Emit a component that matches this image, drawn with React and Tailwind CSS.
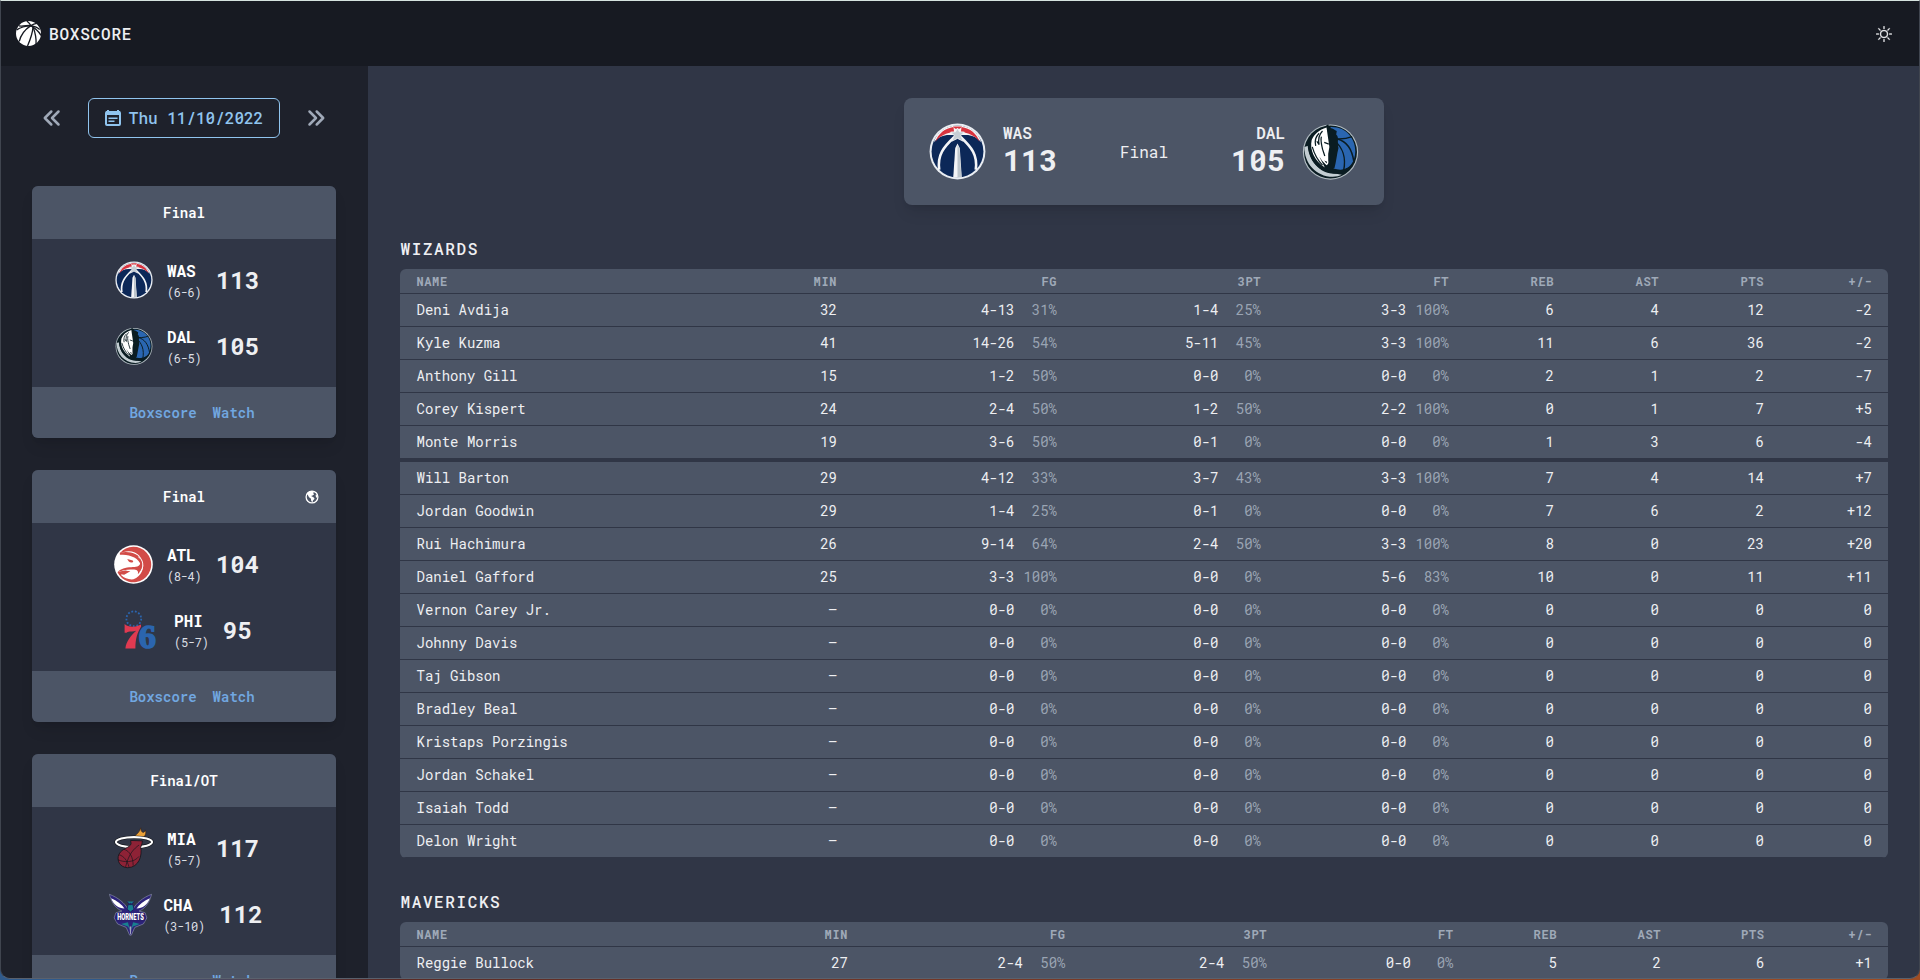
import React from "react";
import { BsSun } from "react-icons/bs";

function BallIcon({ className }) {
  return (
    <svg viewBox="0 0 76 76" className={className}>
      <circle cx="38" cy="38" r="38" fill="#fff" />
      <g fill="none" stroke="#171a22" strokeWidth="4">
        <path d="M2 27C14 19 30 15 45 14" />
        <path d="M9 15C22 17 38 12 45 14C56 16 66 20 72 26" />
        <path d="M45 14C27 26 14 44 10 62" />
        <path d="M52 18C50 40 42 60 35 76" />
        <path d="M52 18C58 34 62 52 61 70" />
        <path d="M45 14C58 22 70 32 76 44" />
        <path d="M33 0C38 4 42 8 45 14C50 11 56 8 63 7" />
      </g>
    </svg>
  );
}

function CalendarIcon({ className }) {
  return (
    <svg viewBox="0 0 16 16" className={className}>
      <path d="M2 0H4V2H2ZM12 0H14V2H12Z" fill="currentColor" />
      <rect x="1" y="2" width="14" height="13" rx="1" fill="none" stroke="currentColor" strokeWidth="2" />
      <path d="M1 1H15V5H1Z" fill="currentColor" />
      <path d="M3.500 7.500H12.500V9H3.500ZM3.500 10.500H9.500V12H3.500Z" fill="currentColor" />
    </svg>
  );
}

function GlobeIcon({ className }) {
  return (
    <svg viewBox="0 0 16 16" className={className}>
      <circle cx="8" cy="8" r="5.900" fill="none" stroke="currentColor" strokeWidth="1.300" />
      <path d="M5 2.500C7 1.800 9 1.900 10 2.600L9.200 4.200L10.200 5.200L8.600 6.500L7 7L9.500 8.200L10.600 9.800L9 11.600L8.400 13.400L7.200 11.800L6.800 9.600L5 8.200L3.600 5.600L2.800 6Z" fill="currentColor" />
      <path d="M12 5L13.600 7.200L12.600 9L11.600 7Z" fill="currentColor" />
    </svg>
  );
}

function WizardsLogo({ className }) {
  return (
    <svg viewBox="0 0 100 100" className={className}>
      <circle cx="50" cy="50" r="49" fill="#e9edf2" />
      <circle cx="50" cy="50" r="45.500" fill="#0c2858" />
      <path d="M8 34C14 16 30 4.500 50 4.500S86 16 92 34C84 24 72 20 62 21H38C28 20 16 24 8 34Z" fill="#f4f5f7" />
      <path d="M11 33C16 19 28 9 43 7L44 16C31 17 19 23 11 33Z" fill="#d8343f" />
      <path d="M89 33C84 19 72 9 57 7L56 16C69 17 81 23 89 33Z" fill="#d8343f" />
      <path d="M42 6L58 6L54 10H46Z" fill="#d8343f" />
      <path d="M44 25C26 42 14 56 18 82" stroke="#f4f5f7" strokeWidth="4.500" fill="none" />
      <path d="M56 25C74 42 86 56 82 82" stroke="#f4f5f7" strokeWidth="4.500" fill="none" />
      <path d="M50 9L53.500 15.500L62 16L56 22L60 32L50 27L40 32L44 22L38 16L46.500 15.500Z" fill="#c5cdd4" stroke="#f4f5f7" strokeWidth="1.500" />
      <path d="M50 36L54 44L57.500 96H42.500L46 44Z" fill="#f4f5f7" />
      <path d="M50 38L53.500 45L57 95H50Z" fill="#bec6cc" />
    </svg>
  );
}

function MavericksLogo({ className }) {
  return (
    <svg viewBox="0 0 100 100" className={className}>
      <circle cx="50" cy="51" r="48.500" fill="#b3bdc3" />
      <circle cx="50" cy="51" r="46.500" fill="#0a1c22" />
      <path d="M50 7C78 6 94 28 93.500 50C93 68 84 80 70 83L55 80L60 50L52 18Z" fill="#2a66b1" />
      <g stroke="#0a1c22" strokeWidth="2.600" fill="none">
        <path d="M50 27C64 29 78 28 88 24" />
        <path d="M62 28C78 32 88 46 91 68" />
        <path d="M58 32C70 42 78 60 73 84" />
      </g>
      <path d="M4 42C4 70 24 94 54 94.500C60 94.500 66 93 70 91C66 90 60 89 54 88C30 86 12 66 11 40Z" fill="#c3cdd2" />
      <path d="M10 40C12 66 30 88 56 89C72 89 82 82 88 74C76 82 66 83 56 82L36 72L18 36Z" fill="#0a1c22" />
      <path d="M40 6L46 2L48 9C54 8 57 13 61 14L60 20C66 25 61 33 64 44C61 56 60 68 57 79L46 84L40 72L30 60L24 40C22 22 30 10 40 8Z" fill="#0a1c22" />
      <path d="M17 30C13 48 22 66 40 78C34 66 28 56 25 42C26 52 32 62 37 68L43 74C46 73 47 70 46 66L46 54L48 42L46 28L43 8C30 12 21 20 17 30Z" fill="#fff" />
      <g stroke="#0a1c22" strokeWidth="2.200" fill="none">
        <path d="M36 14C30 20 28 28 30 38L26 32" />
        <path d="M30 18C24 24 22 32 24 40" />
        <path d="M34 24C32 32 35 40 36 46L40 58" />
        <path d="M18 42C22 56 28 66 36 74" />
        <path d="M39 34L47 37" />
      </g>
      <path d="M39 66L44 68L43 71Z" fill="#0a1c22" />
    </svg>
  );
}

function HawksLogo({ className }) {
  return (
    <svg viewBox="0 0 100 100" className={className}>
      <circle cx="50" cy="50" r="49.500" fill="#fff" />
      <path d="M15 21A45.500 45.500 0 1 1 9 70L34 65C22 71 20 75 18 77A40 40 0 0 0 50 88A37 37 0 1 0 25 18Z" fill="#d24b47" />
      <path d="M15 20C36 15 64 20 73 42C77 54 70 67 61 75C64 66 58 63 48 63C34 62 20 65 9 70C16 61 30 57 44 57C56 57 66 56 67 47C58 29 36 25 15 25Z" fill="#d24b47" />
      <path d="M34 36L46 39C51 40 50 45 45 45C39 45 36 41 34 36Z" fill="#d24b47" />
      <path d="M10 71C20 65 32 65 42 67L26 76C20 76 15 73 10 71Z" fill="#d24b47" />
      <path d="M62 30C76 38 78 58 66 70" stroke="#fff" strokeWidth="2.500" fill="none" />
    </svg>
  );
}

function SixersLogo({ className }) {
  return (
    <svg viewBox="9 0 100 100" className={className}>
      <circle cx="41" cy="22" r="18.500" fill="none" stroke="#2b65ae" strokeWidth="4.500" strokeDasharray="4.500 4.440" />
      <path d="M18 35C27 44 44 44 59 36V42C50 56 45 72 45 96H20C22 78 34 64 47 52C38 56 29 51 23 57H18Z" fill="#e03a51" />
      <text x="53.500" y="95" fontFamily="Liberation Serif, serif" fontWeight="700" fontSize="86" fill="#2b65ae" stroke="#2b65ae" strokeWidth="4">6</text>
    </svg>
  );
}

function HeatLogo({ className }) {
  return (
    <svg viewBox="0 0 100 100" className={className}>
      <path d="M50 26C54 16 61 18 66 2C67 8 67 12 72 13C76 12 77 9 77 7C80 16 76 22 70 27Z" fill="#e9a13a" stroke="#3b2418" strokeWidth="1.500" />
      <ellipse cx="50" cy="36" rx="43" ry="12" fill="none" stroke="#15171d" strokeWidth="8" />
      <ellipse cx="50" cy="36" rx="43" ry="12" fill="none" stroke="#fff" strokeWidth="5" />
      <path d="M42 32L70 33L69 40L66 48C70 68 62 96 35 97C16 96 8 80 14 65C22 50 40 50 43 40Z" fill="#8e2236" stroke="#15171d" strokeWidth="2" />
      <path d="M14 66C26 69 34 80 38 95M26 53C40 57 48 72 48 92M62 43C50 52 38 62 30 95M12 78C24 84 50 86 62 70" stroke="#15171d" strokeWidth="1.600" fill="none" />
    </svg>
  );
}

function HornetsLogo({ className }) {
  return (
    <svg viewBox="0 0 100 100" className={className}>
      <path d="M1 3C20 10 38 24 44 38H56C62 24 80 10 99 3C95 18 88 34 70 42L84 46L88 58L80 72L60 80L52 98L48 98L40 80L20 72L12 58L16 46L30 42C12 34 5 18 1 3Z" fill="#2c237a" stroke="#8e93aa" strokeWidth="1.500" />
      <path d="M5 12C18 18 30 26 36 36C22 36 10 26 5 12Z" fill="#fff" />
      <path d="M95 12C82 18 70 26 64 36C78 36 90 26 95 12Z" fill="#fff" />
      <path d="M42 20L48 27H52L58 20M44 28L50 24L56 28L58 38L50 44L42 38Z" fill="#18808f" stroke="#1d1560" strokeWidth="2" />
      <path d="M28 72L44 68L50 90L56 68L72 72L56 78L50 88L44 78Z" fill="#18808f" />
      <path d="M48 78H52L51 96H49Z" fill="#a4a7c0" />
      <rect x="16" y="47" width="68" height="19" rx="2" fill="#2a1f6e" />
      <text x="50" y="63.500" textAnchor="middle" textLength="62" lengthAdjust="spacingAndGlyphs" fontFamily="Roboto, sans-serif" fontWeight="900" fontSize="19" fill="#fff">HORNETS</text>
    </svg>
  );
}

const GAMES = [
  {
    status: "Final",
    teams: [
      { code: "WAS", record: "(6-6)", score: 113, Logo: WizardsLogo, size: "size-[38px]" },
      { code: "DAL", record: "(6-5)", score: 105, Logo: MavericksLogo, size: "size-[38px]" },
    ],
  },
  {
    status: "Final",
    national: true,
    teams: [
      { code: "ATL", record: "(8-4)", score: 104, Logo: HawksLogo, size: "size-[39px]" },
      { code: "PHI", record: "(5-7)", score: 95, Logo: SixersLogo, size: "size-10" },
    ],
  },
  {
    status: "Final/OT",
    teams: [
      { code: "MIA", record: "(5-7)", score: 117, Logo: HeatLogo, size: "size-[42px]" },
      { code: "CHA", record: "(3-10)", score: 112, Logo: HornetsLogo, size: "size-[43px]" },
    ],
  },
];

const HEADINGS = ["NAME", "MIN", "FG", "3PT", "FT", "REB", "AST", "PTS", "+/-"];

const BENCH = [
  "Vernon Carey Jr.",
  "Johnny Davis",
  "Taj Gibson",
  "Bradley Beal",
  "Kristaps Porzingis",
  "Jordan Schakel",
  "Isaiah Todd",
  "Delon Wright",
];

const WIZARDS = [
  ["Deni Avdija", "32", "4-13 31%", "1-4 25%", "3-3 100%", "6", "4", "12", "-2"],
  ["Kyle Kuzma", "41", "14-26 54%", "5-11 45%", "3-3 100%", "11", "6", "36", "-2"],
  ["Anthony Gill", "15", "1-2 50%", "0-0 0%", "0-0 0%", "2", "1", "2", "-7"],
  ["Corey Kispert", "24", "2-4 50%", "1-2 50%", "2-2 100%", "0", "1", "7", "+5"],
  ["Monte Morris", "19", "3-6 50%", "0-1 0%", "0-0 0%", "1", "3", "6", "-4"],
  ["Will Barton", "29", "4-12 33%", "3-7 43%", "3-3 100%", "7", "4", "14", "+7"],
  ["Jordan Goodwin", "29", "1-4 25%", "0-1 0%", "0-0 0%", "7", "6", "2", "+12"],
  ["Rui Hachimura", "26", "9-14 64%", "2-4 50%", "3-3 100%", "8", "0", "23", "+20"],
  ["Daniel Gafford", "25", "3-3 100%", "0-0 0%", "5-6 83%", "10", "0", "11", "+11"],
  ...BENCH.map((name) => [name, "–", "0-0 0%", "0-0 0%", "0-0 0%", "0", "0", "0", "0"]),
];

const MAVERICKS = [["Reggie Bullock", "27", "2-4 50%", "2-4 50%", "0-0 0%", "5", "2", "6", "+1"]];

function Cell({ value, column }) {
  if (column >= 2 && column <= 4) {
    const [made, pct] = value.split(" ");
    return (
      <>
        {made}
        <span className="inline-block w-[42.5px] text-[#9aa4b3]">{pct}</span>
      </>
    );
  }
  return value;
}

function StatTable({ title, rows, columns }) {
  return (
    <section>
      <h2 className="mb-2 h-6 pl-[0.5px] text-base leading-6 font-medium tracking-[0.1em]">{title}</h2>
      <div className="overflow-hidden rounded-md bg-[#4c5566]">
        <div className={`grid ${columns} h-[25px] border-b border-[#303646] text-xs leading-6 font-bold tracking-[0.05em] text-[#9fa9b8]`}>
          {HEADINGS.map((h, i) => (
            <div key={h} className={i === 0 ? "pl-[16.5px]" : "pr-4 text-right"}>{h}</div>
          ))}
        </div>
        {rows.map((row, r) => (
          <div
            key={row[0]}
            className={`grid ${columns} border-[#303646] text-sm leading-8 ${r === 4 ? "border-b-4" : "border-b"}`}
          >
            {row.map((value, i) => (
              <div key={i} className={i === 0 ? "pl-[16.5px]" : "pr-4 text-right"}>
                <Cell value={value} column={i} />
              </div>
            ))}
          </div>
        ))}
      </div>
    </section>
  );
}

function GameCard({ game }) {
  return (
    <div className="shrink-0 overflow-hidden rounded-md bg-[#303646] shadow-lg">
      <div className="grid h-[53px] grid-cols-[1fr_auto_1fr] items-center bg-[#4c5566] px-4 text-sm font-semibold text-white">
        <span />
        <span>{game.status}</span>
        {game.national ? <GlobeIcon className="size-4 justify-self-end" /> : <span />}
      </div>
      <div className="h-[148px] py-2">
        {game.teams.map(({ code, record, score, Logo, size }) => (
          <div key={code} className="flex h-[66px] items-center justify-center pl-px">
            <div className="flex w-12 justify-center">
              <Logo className={size} />
            </div>
            <div className="ml-[9px]">
              <div className="text-base leading-6 font-bold text-white">{code}</div>
              <div className="text-xs leading-[18px] tracking-tight text-[#dcdfe4]">{record}</div>
            </div>
            <div className="ml-[14.5px] text-2xl font-bold">{score}</div>
          </div>
        ))}
      </div>
      <div className="flex h-[51px] items-center justify-center gap-4 bg-[#4c5566] pl-4 text-sm font-semibold text-[#71a7e0]">
        <a>Boxscore</a>
        <a>Watch</a>
      </div>
    </div>
  );
}

function Chevrons({ d }) {
  return (
    <button className="flex size-10 items-center justify-center text-[#a0a9b8]">
      <svg viewBox="0 0 24 24" className="size-6" fill="none" stroke="currentColor" strokeWidth="2.5" strokeLinecap="round" strokeLinejoin="round">
        <path d={d} />
      </svg>
    </button>
  );
}

export default function App() {
  return (
    <div className="h-[980px] w-full overflow-hidden bg-linear-to-r from-[#2f5a8c] from-5% via-[#5a2a25] via-20% to-[#a04c22] pb-px font-['Roboto_Mono','DejaVu_Sans_Mono',monospace] text-[#eeeff2]">
      <div className="relative flex h-[979px] flex-col overflow-hidden rounded-b-[10px] border border-[#40454f] border-t-[#d6e3df] border-b-[#5a616d] bg-[#303646]">
        <header className="flex h-[65px] shrink-0 items-center justify-between bg-[#171a22] pr-[27px] pl-[15px]">
          <div className="flex items-center gap-2">
            <BallIcon className="size-[25px]" />
            <span className="text-base font-medium tracking-[0.05em]">BOXSCORE</span>
          </div>
          <BsSun className="size-4 stroke-current [stroke-width:0.3px]" />
        </header>
        <div className="flex min-h-0 flex-1">
          <aside className="flex w-[367px] shrink-0 flex-col overflow-hidden bg-[#1e212b] pt-8 pr-8 pl-[31px]">
            <div className="mb-12 flex shrink-0 items-center justify-between">
              <Chevrons d="M11.3 18.5L4.8 12L11.3 5.5M18.5 18.5L12 12L18.5 5.5" />
              <button className="flex h-10 w-48 items-center justify-center gap-2 rounded-md border border-[#90c4ee] text-base font-medium text-[#90c4ee]">
                <CalendarIcon className="size-4" />
                <span>Thu 11/10/2022</span>
              </button>
              <Chevrons d="M12.7 5.5L19.2 12L12.7 18.5M5.5 5.5L12 12L5.5 18.5" />
            </div>
            <div className="flex flex-col gap-8">
              {GAMES.map((game) => (
                <GameCard key={game.teams[0].code} game={game} />
              ))}
            </div>
          </aside>
          <main className="flex min-w-0 flex-1 flex-col gap-8 overflow-hidden pt-8 pr-[31px] pl-8">
            <div className="flex h-[107px] w-[480px] shrink-0 items-center justify-between self-center rounded-lg bg-[#4c5566] px-[25px] shadow-lg">
              <div className="flex items-center gap-[17px]">
                <WizardsLogo className="size-[57px]" />
                <div className="pb-[3px]">
                  <div className="text-base leading-5 font-semibold">WAS</div>
                  <div className="text-3xl leading-[34px] font-bold">113</div>
                </div>
              </div>
              <div className="text-base">Final</div>
              <div className="flex items-center gap-[17px] text-right">
                <div className="pb-[3px]">
                  <div className="text-base leading-5 font-semibold">DAL</div>
                  <div className="text-3xl leading-[34px] font-bold">105</div>
                </div>
                <MavericksLogo className="size-[57px]" />
              </div>
            </div>
            <StatTable title="WIZARDS" rows={WIZARDS} columns="grid-cols-[300px_153px_220px_204px_188px_105px_105px_105px_108px]" />
            <StatTable title="MAVERICKS" rows={MAVERICKS} columns="grid-cols-[300px_164px_217.5px_201.5px_186.5px_103.5px_104px_103.5px_107.5px]" />
          </main>
        </div>
      </div>
    </div>
  );
}
